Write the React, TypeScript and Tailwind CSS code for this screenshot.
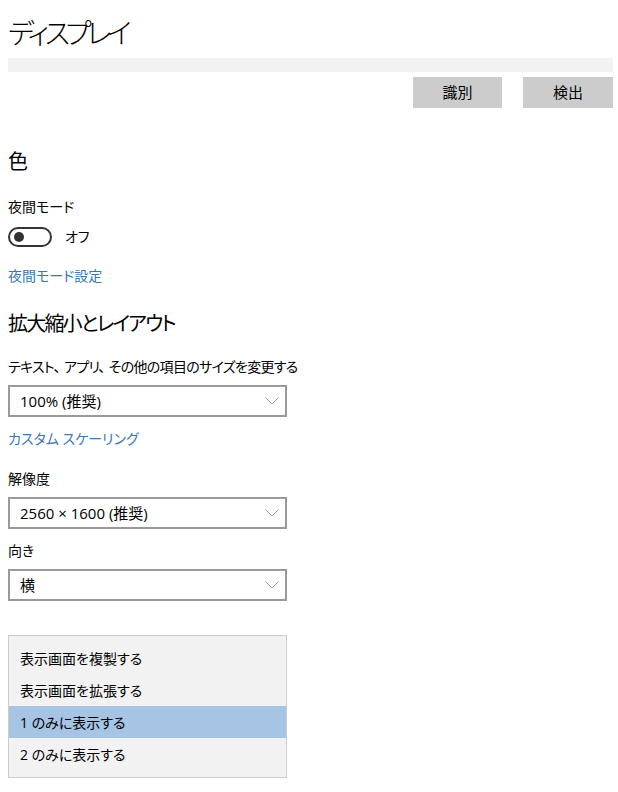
import React from "react";

const font = "font-['Open_Sans','Noto_Sans_CJK_JP',sans-serif] [font-feature-settings:'palt']";

function Chevron() {
  return (
    <svg width="14" height="8" viewBox="0 0 14 8" className="shrink-0">
      <path d="M0.5 0.5 L7 7 L13.5 0.5" fill="none" stroke="#a3a3a3" strokeWidth="1" />
    </svg>
  );
}

function Dropdown({ value }: { value: string }) {
  return (
    <div className="w-[279px] h-[32px] border-2 border-[#999999] bg-white flex items-center justify-between pl-[10px] pr-[6px]">
      <span className="text-[15px] text-black leading-none">{value}</span>
      <Chevron />
    </div>
  );
}

export default function App() {
  const items = ["表示画面を複製する", "表示画面を拡張する", "1 のみに表示する", "2 のみに表示する"];
  return (
    <div className={`${font} w-[618px] h-[792px] bg-white pl-[8px] pr-[5px] flex flex-col text-black overflow-hidden`}>
      <h1 className="mt-[15px] text-[28px] leading-[36px] font-light tracking-[-4.5px]">ディスプレイ</h1>
      <div className="mt-[7px] h-[14px] bg-[#f2f2f2]" />
      <div className="mt-[5px] h-[31px] flex justify-end gap-[21px]">
        <button className="w-[89px] h-full bg-[#cccccc] text-[15px]">識別</button>
        <button className="w-[90px] h-full bg-[#cccccc] text-[15px]">検出</button>
      </div>
      <h2 className="mt-[40px] text-[20px] leading-[28px]">色</h2>
      <div className="mt-[21px] text-[14px] leading-[20px]">夜間モード</div>
      <div className="mt-[10px] h-[20px] flex items-center gap-[13px]">
        <div className="w-[44px] h-[20px] rounded-full border-2 border-[#333333] flex items-center pl-[4px]">
          <div className="w-[10px] h-[10px] rounded-full bg-[#333333]" />
        </div>
        <span className="text-[14px] leading-[20px]">オフ</span>
      </div>
      <div className="mt-[19px] text-[14px] leading-[20px] text-[#3a76b4]">夜間モード設定</div>
      <h2 className="mt-[24px] text-[20px] leading-[28px] tracking-[-1.8px]">拡大縮小とレイアウト</h2>
      <div className="mt-[19px] text-[14px] leading-[20px] tracking-[-0.7px]">
        テキスト<span className="mr-[4px]">、</span>アプリ<span className="mr-[4px]">、</span>その他の項目のサイズを変更する
      </div>
      <div className="mt-[8px]"><Dropdown value="100% (推奨)" /></div>
      <div className="mt-[12px] text-[14px] leading-[20px] text-[#3a76b4]">カスタム スケーリング</div>
      <div className="mt-[20px] text-[14px] leading-[20px]">解像度</div>
      <div className="mt-[8px]"><Dropdown value="2560 × 1600 (推奨)" /></div>
      <div className="mt-[12px] text-[14px] leading-[20px]">向き</div>
      <div className="mt-[8px]"><Dropdown value="横" /></div>
      <div className="mt-[34px] w-[279px] border border-[#cccccc] bg-[#f2f2f2] pt-[6px] pb-[7px] flex flex-col">
        {items.map((t, i) => (
          <div
            key={t}
            className={`h-[32px] flex items-center pl-[11px] text-[14px] ${i === 2 ? "bg-[#a6c4e4]" : ""}`}
          >
            {t}
          </div>
        ))}
      </div>
    </div>
  );
}
